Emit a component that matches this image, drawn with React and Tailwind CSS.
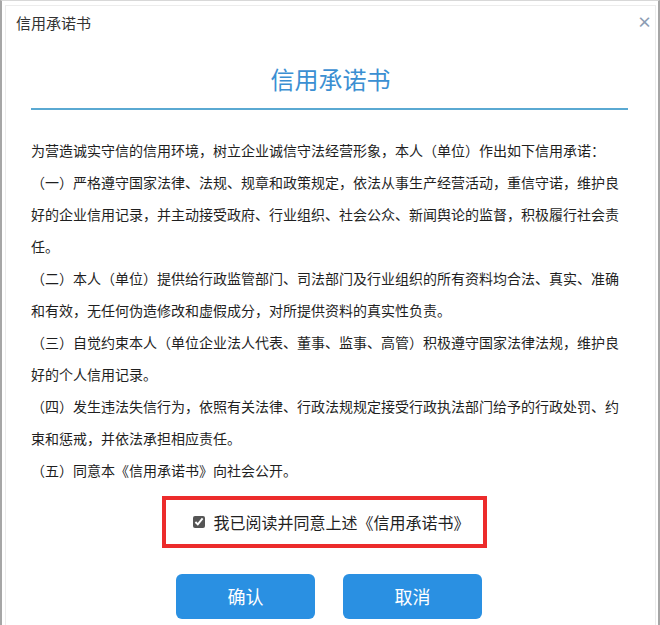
import React from 'react';

const paragraphs = [
    '为营造诚实守信的信用环境，树立企业诚信守法经营形象，本人（单位）作出如下信用承诺：',
    '（一）严格遵守国家法律、法规、规章和政策规定，依法从事生产经营活动，重信守诺，维护良好的企业信用记录，并主动接受政府、行业组织、社会公众、新闻舆论的监督，积极履行社会责任。',
    '（二）本人（单位）提供给行政监管部门、司法部门及行业组织的所有资料均合法、真实、准确和有效，无任何伪造修改和虚假成分，对所提供资料的真实性负责。',
    '（三）自觉约束本人（单位企业法人代表、董事、监事、高管）积极遵守国家法律法规，维护良好的个人信用记录。',
    '（四）发生违法失信行为，依照有关法律、行政法规规定接受行政执法部门给予的行政处罚、约束和惩戒，并依法承担相应责任。',
    '（五）同意本《信用承诺书》向社会公开。',
];

const App = () => {
    return (
        <div
            className="w-[660px] h-[625px] bg-white border-l-2 border-r-2 border-t border-l-[#a6a6a6] border-r-[#a6a6a6] border-t-[#d8d8d8] overflow-hidden"
            style={{ fontFamily: '"Noto Sans CJK SC", "Noto Sans", sans-serif' }}
        >
            <div className="mt-[4px] ml-[3px] mr-[2px] h-full border-t border-l border-r border-[#ececec] text-[#333]">
                {/* --- header --- */}
                <div className="flex items-center justify-between h-[34px] pl-[10px] pr-[3px]">
                    <span className="text-[15px] leading-[20px] text-[#333]">信用承诺书</span>
                    <span className="text-[15px] font-bold leading-none text-[#8c9db3] mb-[4px]">×</span>
                </div>

                {/* --- big title --- */}
                <div className="mt-[23px] text-center text-[24px] leading-[32px] text-[#3b8fd2]">信用承诺书</div>
                <div className="mt-[13px] ml-[25px] mr-[27px] h-[2px] bg-[#5aa9d2]" />

                {/* --- body --- */}
                <div className="mt-[24px] pl-[25px] w-[618px] text-[14px] leading-[32px] text-[#1f1f1f]">
                    {paragraphs.map((p, i) => (
                        <p key={i}>{p}</p>
                    ))}
                </div>

                {/* --- agree box --- */}
                <div className="mt-[10px] flex justify-center">
                    <div className="ml-[-12px] w-[325px] h-[52px] border-4 border-[#ec2b2b] flex items-center justify-center gap-[8px]">
                        <input type="checkbox" defaultChecked className="w-[12px] h-[12px] accent-[#555] ml-[14px]" />
                        <span className="text-[16px] leading-[20px] text-[#1f1f1f]">我已阅读并同意上述《信用承诺书》</span>
                    </div>
                </div>

                {/* --- buttons --- */}
                <div className="mt-[26px] flex justify-center gap-[28px] ml-[-3px]">
                    <button className="w-[139px] h-[45px] rounded-[6px] bg-[#2a90e2] text-white text-[18px]">确认</button>
                    <button className="w-[139px] h-[45px] rounded-[6px] bg-[#2a90e2] text-white text-[18px]">取消</button>
                </div>
            </div>
        </div>
    );
};

export default App;
